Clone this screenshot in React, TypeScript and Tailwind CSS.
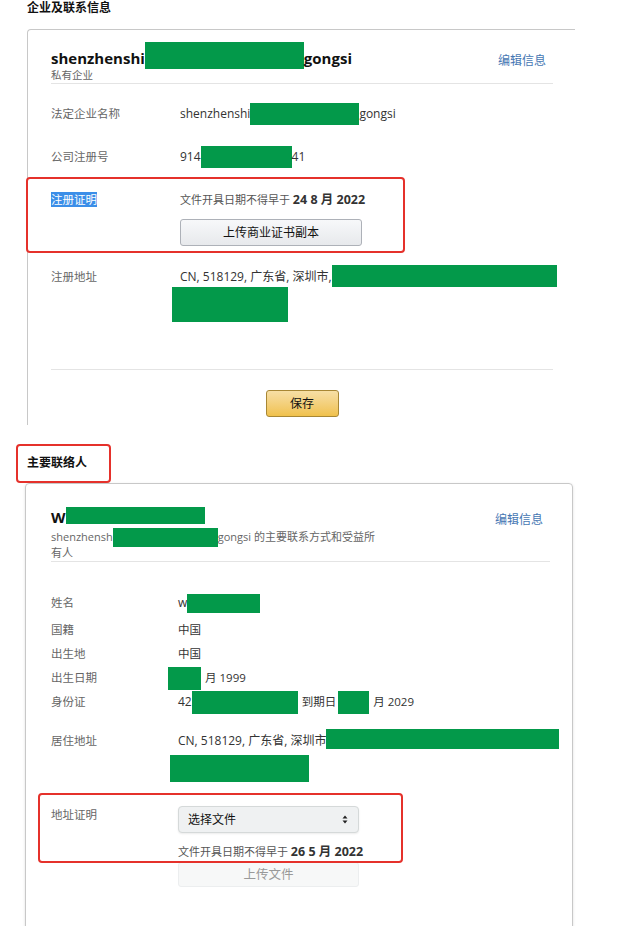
import React from "react";

const Green = ({ className = "" }: { className?: string }) => (
  <span className={"block shrink-0 bg-[#03994a] " + className} />
);

const Label = ({ children, w = "w-[129px]" }: { children: React.ReactNode; w?: string }) => (
  <span className={"shrink-0 text-[#666] " + w}>{children}</span>
);

const SelectArrows = () => (
  <svg width="6" height="9" viewBox="0 0 6 9" className="text-[#222]">
    <path d="M3 0.5 L5.5 3.5 H0.5 Z" fill="currentColor" />
    <path d="M3 8.5 L5.5 5.5 H0.5 Z" fill="currentColor" />
  </svg>
);

export default function App() {
  return (
    <div className="relative h-[926px] w-[628px] overflow-hidden bg-white font-['Open_Sans','Noto_Sans_CJK_SC',sans-serif] text-[#333]">
      <h2 className="h-[29px] pl-[27px] text-[12px] font-bold leading-[15px] text-[#111]">企业及联系信息</h2>

      {/* company card */}
      <section className="ml-[27px] h-[396px] w-[548px] rounded-tl-[4px] border-l border-t border-[#c8c8c8] pl-[23px] pt-[18px]">
        <div className="flex w-[502px] items-start justify-between border-b border-[#e4e4e4]">
          <div>
            <div className="flex h-[20px] items-center whitespace-nowrap text-[15px] font-bold leading-[20px] text-[#111]">
              <span>shenzhenshi</span>
              <Green className="mb-[5px] h-[27px] w-[159px]" />
              <span>gongsi</span>
            </div>
            <div className="h-[15px] text-[10.5px] leading-[15px] text-[#666]">私有企业</div>
          </div>
          <a className="mr-[7px] mt-[3px] cursor-pointer text-[12px] leading-[20px] text-[#4677b3]">编辑信息</a>
        </div>

        <div className="mt-[20px] whitespace-nowrap text-[11.5px] leading-[20px]">
          <div className="flex h-[20px] items-center">
            <Label>法定企业名称</Label>
            <span className="text-[12px]">shenzhenshi</span>
            <Green className="h-[22px] w-[109px]" />
            <span className="text-[12px]">gongsi</span>
          </div>

          <div className="mt-[23px] flex h-[20px] items-center">
            <Label>公司注册号</Label>
            <span className="text-[12px]">914</span>
            <Green className="h-[22px] w-[91px]" />
            <span className="text-[12px]">41</span>
          </div>

          <div className="mt-[23px] flex items-start">
            <span className="w-[129px] shrink-0">
              <span className="bg-[#3b8ee8] text-white">注册证明</span>
            </span>
            <div className="flex flex-col">
              <div className="h-[20px] text-[11px] text-[#555]">
                文件开具日期不得早于 <b className="text-[12.5px] text-[#333]">24 8 月 2022</b>
              </div>
              <button className="mt-[9px] h-[27px] w-[182px] rounded-[3px] border border-[#adb1b8] bg-gradient-to-b from-[#f7f8fa] to-[#e7e9ec] text-[12px] leading-[25px] text-[#111]">
                上传商业证书副本
              </button>
            </div>
          </div>

          <div className="mt-[21px] flex items-start">
            <Label>注册地址</Label>
            <div className="flex flex-col">
              <div className="flex h-[20px] items-center">
                <span className="text-[12px]">CN, 518129, 广东省, 深圳市,</span>
                <Green className="mb-[2px] h-[22px] w-[225px]" />
              </div>
              <Green className="-ml-[8px] h-[35px] w-[116px]" />
            </div>
          </div>
        </div>

        <div className="mt-[47px] w-[502px] border-t border-[#e4e4e4]" />
        <div className="flex w-[502px] justify-center">
          <button className="mt-[20px] h-[27px] w-[73px] rounded-[3px] border border-[#a88734] bg-gradient-to-b from-[#f7dfa5] to-[#f0c14b] text-[12px] text-[#111]">
            保存
          </button>
        </div>
      </section>

      <h2 className="h-[58px] pl-[27px] pt-[30px] text-[12px] font-bold leading-[16px] text-[#111]">主要联络人</h2>

      {/* contact card */}
      <section className="ml-[25px] w-[548px] rounded-[4px] border border-[#c8c8c8] pb-[80px] pl-[25px] pr-[22px] pt-[23px] shadow-[0_1px_3px_rgba(0,0,0,0.12)]">
        <div className="flex items-start justify-between border-b border-[#e4e4e4]">
          <div>
            <div className="flex h-[20px] items-center text-[15px] font-bold leading-[20px] text-[#111]">
              <span>W</span>
              <Green className="mb-[4px] h-[17px] w-[139px]" />
            </div>
            <div className="mt-[2px] whitespace-nowrap text-[11px] leading-[16px] text-[#666]">
              <div className="flex h-[16px] items-center">
                <span>shenzhensh</span>
                <Green className="h-[19px] w-[105px]" />
                <span>gongsi 的主要联系方式和受益所</span>
              </div>
              <div>有人</div>
            </div>
          </div>
          <a className="mr-[7px] mt-[3px] cursor-pointer text-[12px] leading-[20px] text-[#4677b3]">编辑信息</a>
        </div>

        <div className="mt-[29px] whitespace-nowrap text-[11.5px] leading-[20px]">
          <div className="flex h-[24px] items-center">
            <Label w="w-[127px]">姓名</Label>
            <span className="text-[12px]">w</span>
            <Green className="h-[19px] w-[73px]" />
          </div>
          <div className="mt-[3px] flex h-[24px] items-center">
            <Label w="w-[127px]">国籍</Label>
            <span>中国</span>
          </div>
          <div className="flex h-[24px] items-center">
            <Label w="w-[127px]">出生地</Label>
            <span>中国</span>
          </div>
          <div className="flex h-[24px] items-center">
            <Label w="w-[127px]">出生日期</Label>
            <Green className="-ml-[10px] h-[23px] w-[33px]" />
            <span className="ml-[4px]">月 1999</span>
          </div>
          <div className="flex h-[24px] items-center">
            <Label w="w-[127px]">身份证</Label>
            <span className="text-[12px]">42</span>
            <Green className="h-[23px] w-[106px]" />
            <span className="ml-[4px] mr-[2px]">到期日</span>
            <Green className="h-[23px] w-[31px]" />
            <span className="ml-[4px]">月 2029</span>
          </div>

          <div className="mt-[17px] flex items-start">
            <Label w="w-[127px]">居住地址</Label>
            <div className="flex flex-col">
              <div className="flex h-[20px] items-center">
                <span className="text-[12px]">CN, 518129, 广东省, 深圳市</span>
                <Green className="mb-[4px] h-[20px] w-[233px]" />
              </div>
              <Green className="-ml-[8px] mt-[4px] h-[27px] w-[139px]" />
            </div>
          </div>

          <div className="mt-[23px] flex items-start">
            <Label w="w-[127px]">地址证明</Label>
            <div className="flex flex-col">
              <div className="mt-[1px] flex h-[27px] w-[181px] items-center justify-between rounded-[4px] border border-[#d5d9d9] bg-[#eff1f2] pl-[9px] pr-[10px] text-[12px] text-[#111] shadow-[0_1px_2px_rgba(0,0,0,0.08)]">
                <span>选择文件</span>
                <SelectArrows />
              </div>
              <div className="mt-[9px] h-[20px] text-[11px] text-[#555]">
                文件开具日期不得早于 <b className="text-[12.5px] text-[#333]">26 5 月 2022</b>
              </div>
              <button className="h-[25px] w-[181px] rounded-[3px] border border-[#eceeef] bg-[#f7f8f8] text-[12.5px] text-[#999]">
                上传文件
              </button>
            </div>
          </div>
        </div>
      </section>

      {/* annotation boxes */}
      <div className="absolute left-[26px] top-[177px] h-[76px] w-[379px] rounded-[4px] border-2 border-[#e5312b]" />
      <div className="absolute left-[16px] top-[444px] h-[39px] w-[95px] rounded-[4px] border-2 border-[#e5312b]" />
      <div className="absolute left-[38px] top-[793px] h-[70px] w-[365px] rounded-[4px] border-2 border-[#e5312b]" />
    </div>
  );
}
